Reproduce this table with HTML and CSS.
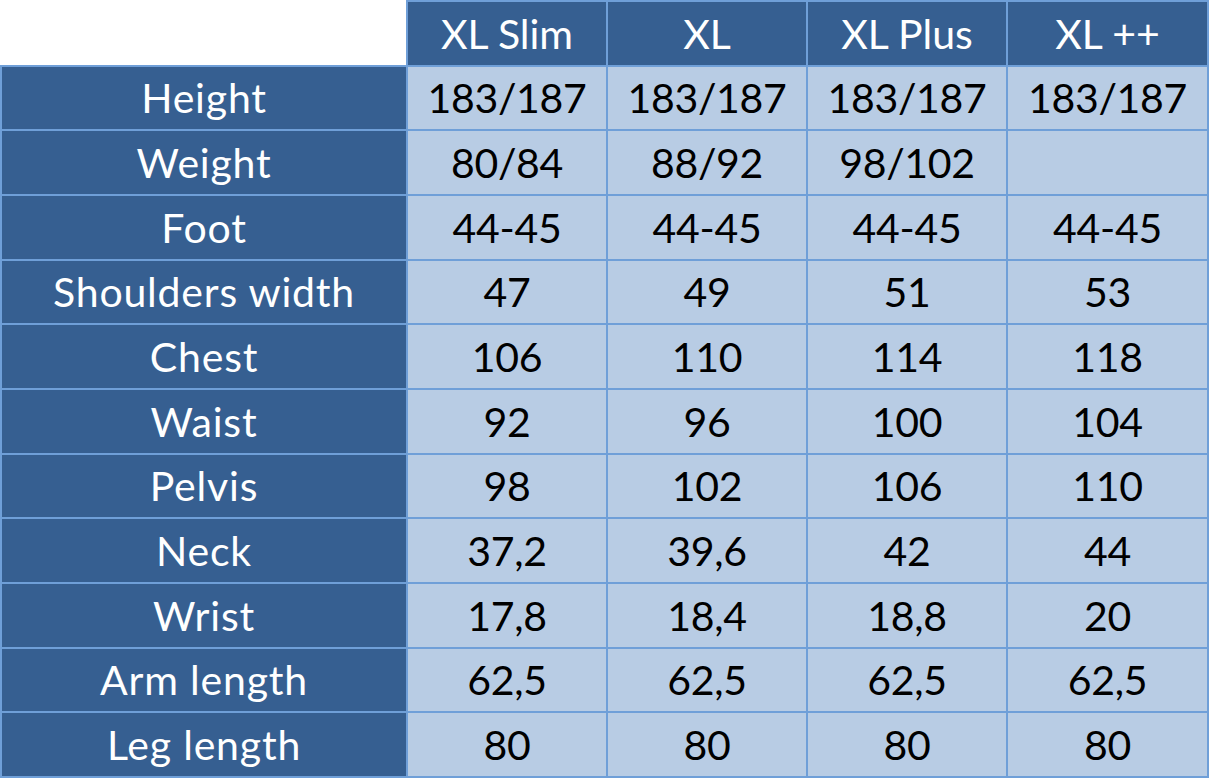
FILE: index.html
```html
<!DOCTYPE html>
<html>
<head>
<meta charset="utf-8">
<link rel="stylesheet" href="styles.css">
</head>
<body>
<div class="table">
  <div class="corner"></div>
  <div class="head">XL Slim</div><div class="head">XL</div><div class="head">XL Plus</div><div class="head">XL ++</div>

  <div class="label">Height</div><div class="cell">183/187</div><div class="cell">183/187</div><div class="cell">183/187</div><div class="cell">183/187</div>
  <div class="label">Weight</div><div class="cell">80/84</div><div class="cell">88/92</div><div class="cell">98/102</div><div class="cell"></div>
  <div class="label">Foot</div><div class="cell">44-45</div><div class="cell">44-45</div><div class="cell">44-45</div><div class="cell">44-45</div>
  <div class="label">Shoulders width</div><div class="cell">47</div><div class="cell">49</div><div class="cell">51</div><div class="cell">53</div>
  <div class="label">Chest</div><div class="cell">106</div><div class="cell">110</div><div class="cell">114</div><div class="cell">118</div>
  <div class="label">Waist</div><div class="cell">92</div><div class="cell">96</div><div class="cell">100</div><div class="cell">104</div>
  <div class="label">Pelvis</div><div class="cell">98</div><div class="cell">102</div><div class="cell">106</div><div class="cell">110</div>
  <div class="label">Neck</div><div class="cell">37,2</div><div class="cell">39,6</div><div class="cell">42</div><div class="cell">44</div>
  <div class="label">Wrist</div><div class="cell">17,8</div><div class="cell">18,4</div><div class="cell">18,8</div><div class="cell">20</div>
  <div class="label">Arm length</div><div class="cell">62,5</div><div class="cell">62,5</div><div class="cell">62,5</div><div class="cell">62,5</div>
  <div class="label">Leg length</div><div class="cell">80</div><div class="cell">80</div><div class="cell">80</div><div class="cell">80</div>
</div>
</body>
</html>
```
FILE: styles.css
```css
html, body {
  margin: 0;
  padding: 0;
  background: #ffffff;
}
.table {
  box-sizing: border-box;
  width: 1209px;
  height: 778px;
  padding: 2px;
  background: #6f9fd8;
  display: grid;
  grid-template-columns: 404px 198px 198px 198px 199px;
  grid-template-rows: repeat(12, 1fr);
  gap: 2px;
  font-family: "Lato", "Liberation Sans", sans-serif;
  font-size: 41px;
}
.corner {
  background: #ffffff;
  margin: -2px 0 0 -2px;
}
.head, .label, .cell {
  display: flex;
  align-items: center;
  justify-content: center;
  white-space: nowrap;
}
.head, .label {
  background: #365f91;
  color: #ffffff;
}
.label {
  letter-spacing: 0.8px;
}
.cell {
  background: #b8cce4;
  color: #000000;
  letter-spacing: -0.3px;
}
```
